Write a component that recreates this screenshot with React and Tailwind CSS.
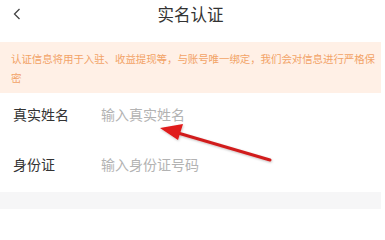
import React from "react";

export default function App() {
  return (
    <div
      className="relative w-[385px] h-[209px] bg-white overflow-hidden"
      style={{ fontFamily: '"Noto Sans CJK SC", "Noto Sans", sans-serif' }}
    >
      <div className="w-[381px]">
        {/* Header */}
        <div className="relative h-[42px] flex justify-center pt-[3px]">
          <svg className="absolute left-[12px] top-[8px]" width="10" height="12" viewBox="0 0 10 12">
            <path d="M7.5 1 L2.5 6 L7.5 11" fill="none" stroke="#444" strokeWidth="1.3" />
          </svg>
          <span className="text-[16.5px] leading-[22px] text-[#333]">实名认证</span>
        </div>
        {/* Notice banner */}
        <div className="bg-[#fff0e6] pl-[11px] pr-[6px] pt-[7px] pb-[5px] h-[51px]">
          <p className="text-[10.5px] leading-[19px] tracking-[-0.1px] text-[#f2a366] whitespace-nowrap">
            认证信息将用于入驻、收益提现等，与账号唯一绑定，我们会对信息进行严格保
            <br />
            密
          </p>
        </div>
        {/* Form */}
        <div className="flex flex-col">
          <div className="flex items-center h-[42px] px-[13px]">
            <span className="w-[88px] text-[14px] text-[#333]">真实姓名</span>
            <span className="text-[14px] text-[#b3b3b3]">输入真实姓名</span>
          </div>
          <div className="flex items-center h-[50px] pt-[8px] px-[13px]">
            <span className="w-[88px] text-[14px] text-[#333]">身份证</span>
            <span className="text-[14px] text-[#b3b3b3]">输入身份证号码</span>
          </div>
        </div>
        <div className="mt-[7px] h-[17px] bg-[#f6f6f7]" />
      </div>

      {/* Red annotation arrow */}
      <svg className="absolute left-0 top-0 pointer-events-none" width="385" height="209" viewBox="0 0 385 209">
        <defs>
          <filter id="sh" x="-20%" y="-50%" width="140%" height="200%">
            <feDropShadow dx="0.5" dy="1" stdDeviation="1" floodColor="#000" floodOpacity="0.25" />
          </filter>
        </defs>
        <g filter="url(#sh)">
          <line x1="270" y1="160" x2="178" y2="133" stroke="#d11f1f" strokeWidth="3" strokeLinecap="round" />
          <polygon points="160,128 183,124 178,140" fill="#e01b1b" />
        </g>
      </svg>
    </div>
  );
}
